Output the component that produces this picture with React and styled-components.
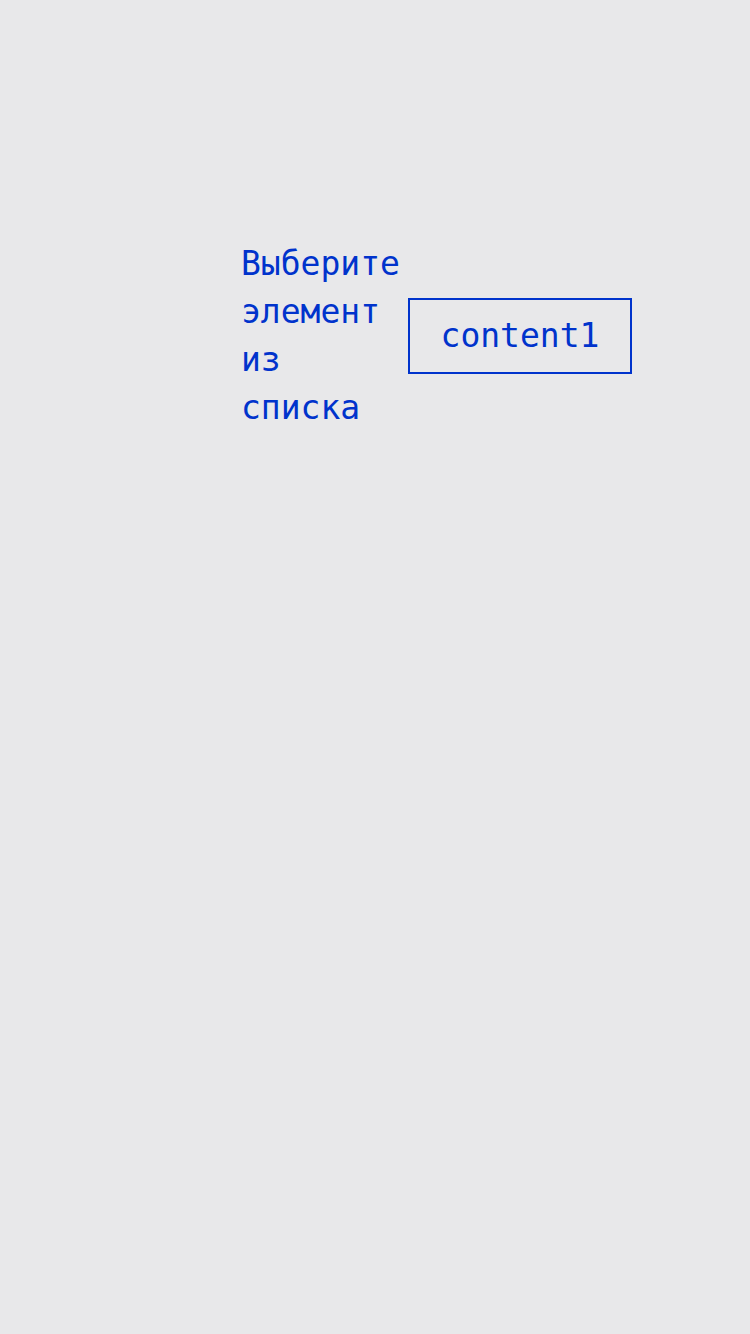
import React from "react";
import styled, { createGlobalStyle } from "styled-components";

const Global = createGlobalStyle`
  html, body { margin: 0; padding: 0; background: #e8e8ea; }
  body { font-family: "DejaVu Sans Mono", "Liberation Mono", monospace; }
`;

const Page = styled.div`
  min-height: 1334px;
  box-sizing: border-box;
  padding: 240px 0 0 241px;
`;

const Row = styled.div`
  display: flex;
  align-items: center;
  gap: 9px;
  width: 391px;
`;

const Label = styled.div`
  font-size: 33px;
  line-height: 48px;
  color: #0033cc;
  width: 158px;
`;

const Box = styled.div`
  border: 2px solid #0033cc;
  color: #0033cc;
  font-size: 33px;
  line-height: 48px;
  width: 224px;
  height: 76px;
  box-sizing: border-box;
  display: flex;
  align-items: center;
  justify-content: center;
`;

export default function App() {
  return (
    <>
      <Global />
      <Page>
        <Row>
          <Label>Выберите элемент из списка</Label>
          <Box>content1</Box>
        </Row>
      </Page>
    </>
  );
}
